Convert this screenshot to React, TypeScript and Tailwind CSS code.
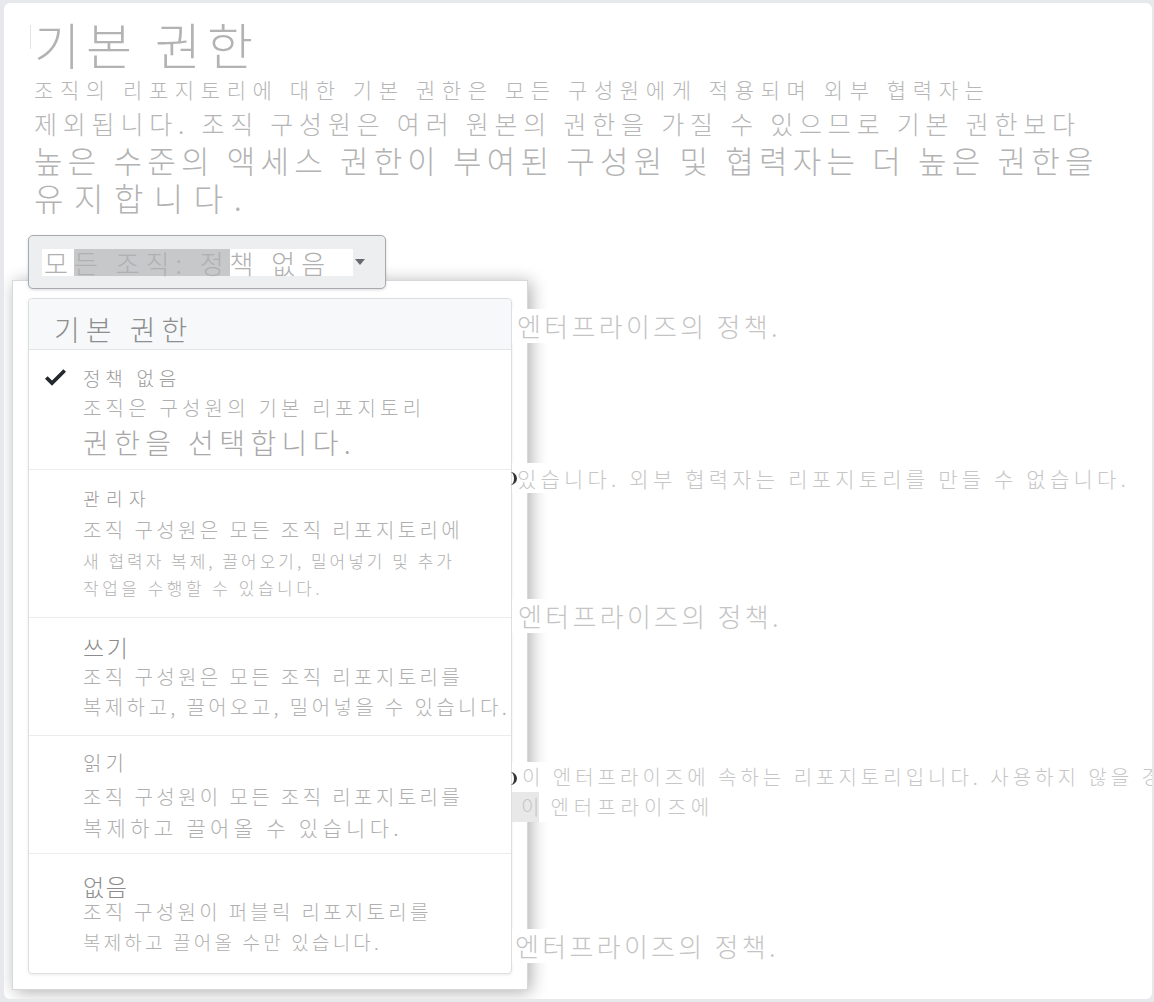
import React from "react";

const Check = () => (
  <svg width="21" height="28" viewBox="0 0 12 16" className="absolute left-[16px] top-[13px]">
    <path d="M12 5l-8 8-4-4 1.5-1.5L4 10l6.5-6.5L12 5z" fill="#24292e" />
  </svg>
);

export default function App() {
  return (
    <div className="w-[1154px] h-[1002px] bg-[#e6e8eb] pt-[3px] pl-[4px] pb-[3px] pr-[2px] font-['Noto_Sans_CJK_KR',sans-serif] font-light overflow-hidden">
      <div className="relative h-full bg-white rounded-[6px] overflow-hidden">
        {/* Header */}
        <div className="pt-[12px] pl-[30px] whitespace-nowrap">
          <div className="relative h-[56px] leading-[56px] text-[50px] text-[#b3b3b3] tracking-[6px]">
            <span className="absolute left-[-4px] top-[10px] h-[24px] w-px bg-[#e4e4e4]" />
            기본 권한
          </div>
          <div className="h-[36px] leading-[36px] text-[21px] text-[#b6b6b6] tracking-[6.6px]">조직의 리포지토리에 대한 기본 권한은 모든 구성원에게 적용되며 외부 협력자는</div>
          <div className="h-[33px] leading-[33px] text-[25px] text-[#b6b6b6] tracking-[5.8px]">제외됩니다. 조직 구성원은 여러 원본의 권한을 가질 수 있으므로 기본 권한보다</div>
          <div className="h-[40px] leading-[40px] text-[31px] text-[#b3b3b3] tracking-[5.2px]">높은 수준의 액세스 권한이 부여된 구성원 및 협력자는 더 높은 권한을</div>
          <div className="h-[35px] leading-[35px] text-[32px] text-[#b3b3b3] tracking-[10.5px]">유지합니다.</div>
        </div>

        {/* Select button */}
        <div className="relative z-30 mt-[20px] ml-[24px] w-[358px] h-[54px] rounded-[5px] border border-[#a7abb0] bg-[#eceef0] flex items-center pl-[13px] shadow-[0_1px_3px_rgba(0,0,0,0.15)]">
          <div className="flex h-[27px] items-center text-[26px] leading-[27px] text-[#b0b0b0] tracking-[6px] whitespace-nowrap">
            <span className="bg-white h-[27px] pl-[2px]">모</span>
            <span className="bg-[#c6c8ca] h-[27px]">든 조직: 정</span>
            <span className="bg-white h-[27px] pr-[22px]">책 없음</span>
          </div>
          <div className="ml-[2px] w-0 h-0 border-l-[5px] border-r-[5px] border-t-[6px] border-l-transparent border-r-transparent border-t-[#666a6e]" />
        </div>

        {/* Underlying page rows (visible at right) */}
        <div className="relative z-20 ml-[508px] whitespace-nowrap">
          <div className="mt-[20px] h-[34px] leading-[34px] text-[26px] text-[#c4c4c4] tracking-[3.3px]">
            <span className="bg-white inline-block pl-[5px] pr-[4px]">엔터프라이즈의 정책.</span>
          </div>
          <div className="relative mt-[120px] h-[30px] leading-[30px] text-[21px] text-[#c6c6c6] tracking-[4.2px]">
            <span className="absolute left-[-3px] top-[9px] w-[8px] h-[13px] rounded-r-full border-r-[3px] border-[#333]" />
            <span className="bg-white inline-block pl-[5px] pr-[4px]">있습니다. 외부 협력자는 리포지토리를 만들 수 없습니다.</span>
          </div>
          <div className="mt-[106px] h-[34px] leading-[34px] text-[26px] text-[#c4c4c4] tracking-[3.3px]">
            <span className="bg-white inline-block pl-[6px] pr-[4px]">엔터프라이즈의 정책.</span>
          </div>
          <div className="relative mt-[129px] h-[30px] leading-[30px] text-[20px] text-[#c6c6c6] tracking-[4px]">
            <span className="absolute left-[-3px] top-[10px] w-[8px] h-[13px] rounded-r-full border-r-[3px] border-[#333]" />
            <span className="bg-white inline-block pl-[10px]">이 엔터프라이즈에 속하는 리포지토리입니다. 사용하지 않을 경우</span>
          </div>
          <div className="h-[30px] leading-[30px] text-[20px] text-[#c6c6c6] flex">
            <span className="bg-[#e8e8e8] inline-block pl-[9px] h-[30px] tracking-[0px]">이</span>
            <span className="bg-white inline-block pl-[11px] pr-[4px] tracking-[5px]">엔터프라이즈에</span>
          </div>
          <div className="mt-[107px] h-[34px] leading-[34px] text-[26px] text-[#c4c4c4] tracking-[3.3px]">
            <span className="bg-white inline-block pl-[3px] pr-[4px]">엔터프라이즈의 정책.</span>
          </div>
        </div>

        {/* Dropdown menu overlay */}
        <div className="absolute z-10 left-[8px] top-[277px] w-[516px] h-[710px] bg-white border border-[#d6d8db] shadow-[3px_2px_16px_rgba(0,0,0,0.32)] pt-[17px] px-[15px]">
          <div className="border border-[#dcdfe2] rounded-[4px] bg-white whitespace-nowrap shadow-[0_1px_3px_rgba(0,0,0,0.08)]">
            <div className="h-[51px] bg-[#f6f8fa] border-b border-[#e1e4e8] pt-[12px] pl-[25px] rounded-t-[4px]">
              <div className="h-[36px] leading-[36px] text-[28px] text-[#8e8e8e] tracking-[6px]">기본 권한</div>
            </div>

            {/* 정책 없음 */}
            <div className="relative border-b border-[#eaecef] pl-[54px] pt-[14px] pb-[8px]">
              <Check />
              <div className="h-[28px] leading-[28px] text-[19px] text-[#9a9a9a] tracking-[4.75px]">정책 없음</div>
              <div className="h-[32px] leading-[32px] text-[20px] text-[#b0b0b0] tracking-[4.2px]">조직은 구성원의 기본 리포지토리</div>
              <div className="h-[37px] leading-[37px] text-[28px] text-[#a8a8a8] tracking-[5.4px]">권한을 선택합니다.</div>
            </div>

            {/* 관리자 */}
            <div className="border-b border-[#eaecef] pl-[54px] pt-[14px] pb-[15px]">
              <div className="h-[28px] leading-[28px] text-[18px] text-[#9a9a9a] tracking-[6.5px]">관리자</div>
              <div className="h-[36px] leading-[36px] text-[20px] text-[#b0b0b0] tracking-[3.4px]">조직 구성원은 모든 조직 리포지토리에</div>
              <div className="h-[26px] leading-[26px] text-[17px] text-[#b0b0b0] tracking-[3px]">새 협력자 복제, 끌어오기, 밀어넣기 및 추가</div>
              <div className="h-[28px] leading-[28px] text-[17px] text-[#b4b4b4] tracking-[3.5px]">작업을 수행할 수 있습니다.</div>
            </div>

            {/* 쓰기 */}
            <div className="border-b border-[#eaecef] pl-[54px] pt-[15px] pb-[14px]">
              <div className="h-[28px] leading-[28px] text-[23px] text-[#8c8c8c] tracking-[2.5px]">쓰기</div>
              <div className="h-[32px] leading-[32px] text-[20px] text-[#b0b0b0] tracking-[3.4px]">조직 구성원은 모든 조직 리포지토리를</div>
              <div className="h-[28px] leading-[28px] text-[20px] text-[#b0b0b0] tracking-[3.4px]">복제하고, 끌어오고, 밀어넣을 수 있습니다.</div>
            </div>

            {/* 읽기 */}
            <div className="border-b border-[#eaecef] pl-[54px] pt-[13px] pb-[16px]">
              <div className="h-[28px] leading-[28px] text-[20px] text-[#a0a0a0] tracking-[4px]">읽기</div>
              <div className="h-[40px] leading-[40px] text-[20px] text-[#b0b0b0] tracking-[3.4px]">조직 구성원이 모든 조직 리포지토리를</div>
              <div className="h-[20px] leading-[20px] text-[21px] text-[#b0b0b0] tracking-[4.3px]">복제하고 끌어올 수 있습니다.</div>
            </div>

            {/* 없음 */}
            <div className="pl-[54px] pt-[19px] pb-[13px]">
              <div className="h-[26px] leading-[26px] text-[23px] text-[#8c8c8c] tracking-[1.5px]">없음</div>
              <div className="h-[25px] leading-[25px] text-[20px] text-[#b0b0b0] tracking-[3.3px]">조직 구성원이 퍼블릭 리포지토리를</div>
              <div className="h-[36px] leading-[36px] text-[19px] text-[#b0b0b0] tracking-[3.2px]">복제하고 끌어올 수만 있습니다.</div>
            </div>
          </div>
        </div>
      </div>
    </div>
  );
}
